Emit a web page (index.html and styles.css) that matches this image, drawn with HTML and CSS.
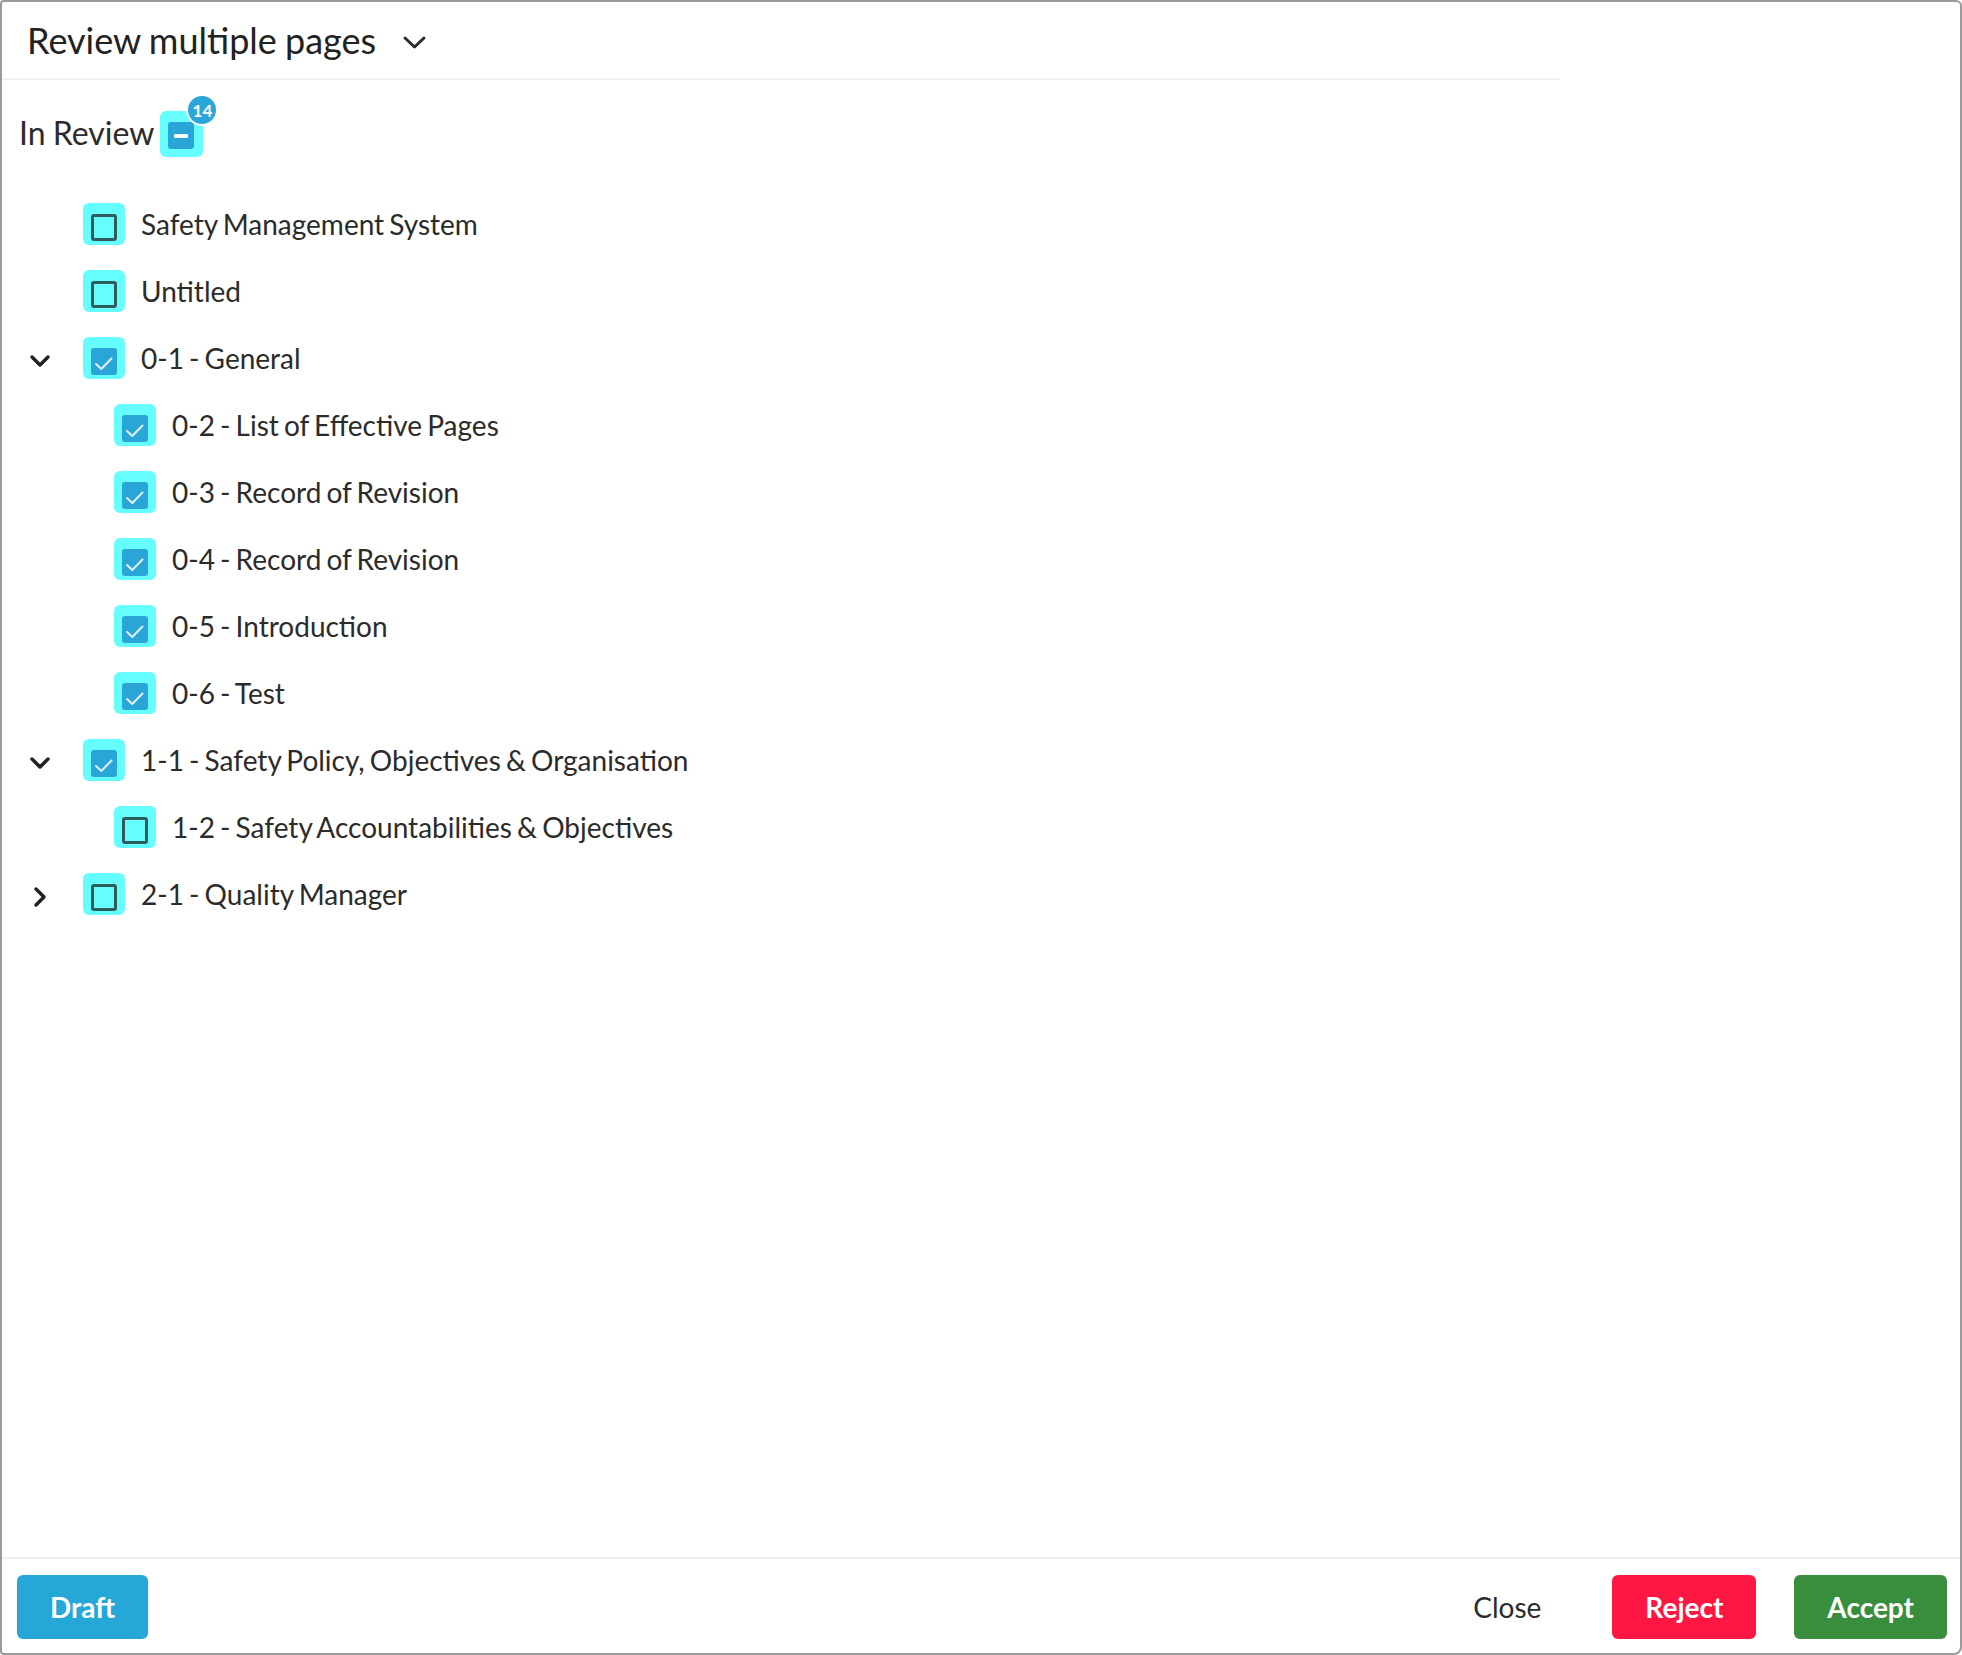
FILE: index.html
```html
<!DOCTYPE html>
<html lang="en">
<head>
  <meta charset="UTF-8">
  <meta name="viewport" content="width=device-width, initial-scale=1.0">
  <title>Review multiple pages</title>
  <link rel="stylesheet" href="styles.css">
</head>
<body>
  <div class="dialog">
    <div class="dialog-header">
      <h1 class="dialog-title">Review multiple pages</h1>
      <svg class="title-caret" width="25" height="15" viewBox="0 0 25 15">
        <polyline points="3,3 12.5,12 22,3" fill="none" stroke="#2b2b2b" stroke-width="3" stroke-linecap="round" stroke-linejoin="round"/>
      </svg>
    </div>

    <div class="dialog-body">
      <div class="status-row">
        <span class="status-label">In Review</span>
        <span class="check-wrap">
          <span class="check">
            <span class="box partial"><span class="dash"></span></span>
          </span>
          <span class="badge">14</span>
        </span>
      </div>

      <ul class="tree">
        <li class="node">
          <span class="toggle"></span>
          <span class="check"><span class="box off"></span></span>
          <span class="label">Safety Management System</span>
        </li>
        <li class="node">
          <span class="toggle"></span>
          <span class="check"><span class="box off"></span></span>
          <span class="label">Untitled</span>
        </li>
        <li class="node">
          <span class="toggle">
            <svg width="22" height="14" viewBox="0 0 22 14"><polyline points="3,3 11,11 19,3" fill="none" stroke="#222" stroke-width="3.5" stroke-linecap="round" stroke-linejoin="round"/></svg>
          </span>
          <span class="check"><span class="box on"><svg width="25" height="27" viewBox="0 0 25 27"><polyline points="5,16 10.3,21 20.5,10.5" fill="none" stroke="#dff3fb" stroke-width="2" stroke-linecap="round" stroke-linejoin="round"/></svg></span></span>
          <span class="label">0-1 - General</span>
        </li>
        <li class="node child">
          <span class="toggle"></span>
          <span class="check"><span class="box on"><svg width="25" height="27" viewBox="0 0 25 27"><polyline points="5,16 10.3,21 20.5,10.5" fill="none" stroke="#dff3fb" stroke-width="2" stroke-linecap="round" stroke-linejoin="round"/></svg></span></span>
          <span class="label">0-2 - List of Effective Pages</span>
        </li>
        <li class="node child">
          <span class="toggle"></span>
          <span class="check"><span class="box on"><svg width="25" height="27" viewBox="0 0 25 27"><polyline points="5,16 10.3,21 20.5,10.5" fill="none" stroke="#dff3fb" stroke-width="2" stroke-linecap="round" stroke-linejoin="round"/></svg></span></span>
          <span class="label">0-3 - Record of Revision</span>
        </li>
        <li class="node child">
          <span class="toggle"></span>
          <span class="check"><span class="box on"><svg width="25" height="27" viewBox="0 0 25 27"><polyline points="5,16 10.3,21 20.5,10.5" fill="none" stroke="#dff3fb" stroke-width="2" stroke-linecap="round" stroke-linejoin="round"/></svg></span></span>
          <span class="label">0-4 - Record of Revision</span>
        </li>
        <li class="node child">
          <span class="toggle"></span>
          <span class="check"><span class="box on"><svg width="25" height="27" viewBox="0 0 25 27"><polyline points="5,16 10.3,21 20.5,10.5" fill="none" stroke="#dff3fb" stroke-width="2" stroke-linecap="round" stroke-linejoin="round"/></svg></span></span>
          <span class="label">0-5 - Introduction</span>
        </li>
        <li class="node child">
          <span class="toggle"></span>
          <span class="check"><span class="box on"><svg width="25" height="27" viewBox="0 0 25 27"><polyline points="5,16 10.3,21 20.5,10.5" fill="none" stroke="#dff3fb" stroke-width="2" stroke-linecap="round" stroke-linejoin="round"/></svg></span></span>
          <span class="label">0-6 - Test</span>
        </li>
        <li class="node">
          <span class="toggle">
            <svg width="22" height="14" viewBox="0 0 22 14"><polyline points="3,3 11,11 19,3" fill="none" stroke="#222" stroke-width="3.5" stroke-linecap="round" stroke-linejoin="round"/></svg>
          </span>
          <span class="check"><span class="box on"><svg width="25" height="27" viewBox="0 0 25 27"><polyline points="5,16 10.3,21 20.5,10.5" fill="none" stroke="#dff3fb" stroke-width="2" stroke-linecap="round" stroke-linejoin="round"/></svg></span></span>
          <span class="label">1-1 - Safety Policy, Objectives &amp; Organisation</span>
        </li>
        <li class="node child">
          <span class="toggle"></span>
          <span class="check"><span class="box off"></span></span>
          <span class="label">1-2 - Safety Accountabilities &amp; Objectives</span>
        </li>
        <li class="node">
          <span class="toggle">
            <svg width="14" height="22" viewBox="0 0 14 22"><polyline points="3,3 11,11 3,19" fill="none" stroke="#222" stroke-width="3.5" stroke-linecap="round" stroke-linejoin="round"/></svg>
          </span>
          <span class="check"><span class="box off"></span></span>
          <span class="label">2-1 - Quality Manager</span>
        </li>
      </ul>
    </div>

    <div class="dialog-footer">
      <button class="btn btn-draft">Draft</button>
      <div class="footer-actions">
        <button class="btn btn-plain">Close</button>
        <button class="btn btn-reject">Reject</button>
        <button class="btn btn-accept">Accept</button>
      </div>
    </div>
  </div>
</body>
</html>
```

FILE: styles.css
```css
* {
  box-sizing: border-box;
}

body {
  margin: 0;
  font-family: Lato, "Open Sans", sans-serif;
  color: #2b2b2b;
  background: #fff;
}

.dialog {
  display: flex;
  flex-direction: column;
  height: 100vh;
  border: 2px solid #9a9a9a;
  border-radius: 4px 6px 8px 4px;
  background: #fff;
}

.dialog-header {
  display: flex;
  align-items: center;
  width: 1558px;
  height: 78px;
  padding-left: 25px;
  border-bottom: 2px solid #f2f2f2;
}

.dialog-title {
  margin: 0;
  font-size: 36px;
  font-weight: 400;
  color: #222;
  word-spacing: -1px;
}

.title-caret {
  margin-left: 26px;
  margin-top: 4px;
}

.dialog-body {
  flex: 1;
  padding: 31px 0 0 17px;
}

.status-row {
  display: flex;
  align-items: center;
  height: 46px;
}

.status-label {
  font-size: 32px;
  margin-right: 6px;
  margin-top: -4px;
  word-spacing: -1px;
}

.check-wrap {
  position: relative;
  display: inline-flex;
}

.check-wrap .check {
  width: 43px;
  height: 46px;
}

.badge {
  position: absolute;
  left: 26px;
  top: -17px;
  width: 32px;
  height: 32px;
  border-radius: 50%;
  border: 2px solid #fff;
  background: #2aa6d8;
  color: #fff;
  font-size: 17px;
  font-weight: 700;
  display: flex;
  align-items: center;
  justify-content: center;
}

.check {
  flex: none;
  display: inline-flex;
  width: 42px;
  height: 42px;
  padding: 11px 8px 4px 8px;
  border-radius: 6px;
  background: #66fdff;
}

.box {
  width: 26px;
  height: 27px;
  border-radius: 3px;
}

.box.off {
  border: 3.5px solid #2f5c5d;
}

.box.on,
.box.partial {
  background: #2aa5d8;
}

.box svg {
  display: block;
}

.box.partial {
  display: flex;
  align-items: center;
  justify-content: center;
}

.dash {
  width: 14px;
  height: 4px;
  background: #fff;
  border-radius: 1px;
}

.tree {
  list-style: none;
  margin: 33px 0 0;
  padding: 0;
}

.node {
  display: flex;
  align-items: center;
  height: 67px;
}

.node.child {
  padding-left: 31px;
}

.toggle {
  width: 42px;
  height: 42px;
  margin-right: 22px;
  display: flex;
  align-items: center;
  justify-content: center;
  padding-top: 6px;
}

.toggle svg {
  display: block;
}

.label {
  margin-left: 16px;
  font-size: 28px;
  word-spacing: -2px;
  color: #2b2b2b;
}

.dialog-footer {
  display: flex;
  align-items: center;
  justify-content: space-between;
  padding: 16px 13px 14px 15px;
  border-top: 2px solid #f0f0f0;
}

.footer-actions {
  display: flex;
  gap: 38px;
}

.btn {
  height: 64px;
  padding: 0 33px;
  border: none;
  border-radius: 6px;
  font-family: Lato, "Open Sans", sans-serif;
  font-size: 28px;
  font-weight: 700;
  color: #fff;
  cursor: pointer;
}

.btn-draft {
  background: #25a8d8;
}

.btn-plain {
  background: transparent;
  color: #2b2b2b;
  font-weight: 400;
}

.btn-reject {
  background: #ff1744;
}

.btn-accept {
  background: #388e3c;
}
```
